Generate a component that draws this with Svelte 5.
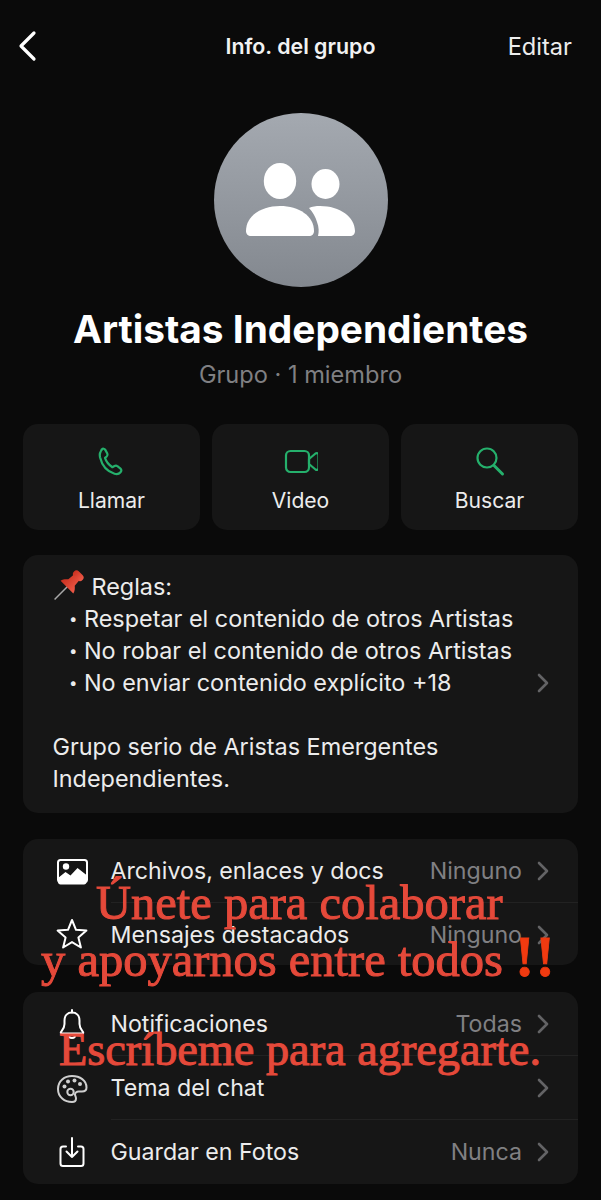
<script>
  const actions = [
    { label: 'Llamar', icon: 'phone' },
    { label: 'Video', icon: 'video' },
    { label: 'Buscar', icon: 'search' }
  ];
  const mediaRows = [
    { label: 'Archivos, enlaces y docs', value: 'Ninguno', icon: 'image' },
    { label: 'Mensajes destacados', value: 'Ninguno', icon: 'star' }
  ];
  const settingRows = [
    { label: 'Notificaciones', value: 'Todas', icon: 'bell' },
    { label: 'Tema del chat', value: '', icon: 'palette' },
    { label: 'Guardar en Fotos', value: 'Nunca', icon: 'save' }
  ];
  const rules = [
    'Respetar el contenido de otros Artistas',
    'No robar el contenido de otros Artistas',
    'No enviar contenido explícito +18'
  ];
</script>

{#snippet chevron()}
  <svg class="chev" width="12" height="20" viewBox="0 0 12 20" fill="none" stroke="#636365" stroke-width="2.600" stroke-linecap="round" stroke-linejoin="round"><path d="M2 2l8 8-8 8"/></svg>
{/snippet}

{#snippet rowIcon(name)}
  <svg width="34" height="34" viewBox="0 0 34 34" fill="none" stroke="#fff" stroke-width="2" stroke-linecap="round" stroke-linejoin="round">
    {#if name === 'image'}
      <rect x="3" y="6" width="29" height="22" rx="2.500" />
      <path d="M3 24l7.500-6 5 3.500 7-7.500 9 7v7c0 1.500-1 2.500-2.500 2.500H5.500C4 30.500 3 29.500 3 28z" fill="#fff" stroke="none" />
      <circle cx="11" cy="12.500" r="3.200" fill="#fff" stroke="none" />
    {:else if name === 'star'}
      <path d="M17 2l4 9.800 10.400.8-8 6.800 2.500 10.100L17 24.100l-8.900 5.400 2.500-10.100-8-6.800 10.400-.8z" />
    {:else if name === 'bell'}
      <path d="M6 25c2-2.500 3.500-4 3.500-8v-3.500c0-5 3-8 7.500-8s7.500 3 7.500 8V17c0 4 1.500 5.500 3.500 8 .5 1 0 1.500-1 1.500H7c-1 0-1.500-.5-1-1.500z"/>
      <path d="M17 3v2.500M13.500 27c0 2.500 1.500 4 3.500 4s3.500-1.500 3.500-4"/>
    {:else if name === 'palette'}
      <path d="M17 5C9.500 5 3 10 3 18s6.500 13 14 13c3 0 4-1.500 4-3.500s-1-2.500-1-4 1.500-3 3.500-3H27c3 0 4.500-1.500 4.500-4C31.500 9.500 25 5 17 5z" stroke="#cfcfcf"/>
      <circle cx="9.500" cy="15.500" r="2" fill="#cfcfcf" stroke="none" />
      <circle cx="13" cy="10.500" r="2" fill="#cfcfcf" stroke="none" />
      <circle cx="19.500" cy="9.500" r="2" fill="#cfcfcf" stroke="none" />
      <circle cx="25" cy="13" r="2" fill="#cfcfcf" stroke="none" />
      <circle cx="15.500" cy="21" r="3.200" stroke="#cfcfcf" />
    {:else}
      <path d="M11 11.500H8c-1.800 0-2.500 1-2.500 2.500v14.500C5.500 30 6.500 31 8 31h18c1.500 0 2.500-1 2.500-2.500V14c0-1.500-.7-2.500-2.500-2.500h-3"/>
      <path d="M17 3v19M11.500 16.500L17 22l5.500-5.500"/>
    {/if}
  </svg>
{/snippet}

<div class="screen">
  <header class="topbar">
    <svg class="back" width="20" height="32" viewBox="0 0 20 32" fill="none" stroke="#fff" stroke-width="3.200" stroke-linecap="round" stroke-linejoin="round"><path d="M16 3L3 16l13 13"/></svg>
    <div class="top-title">Info. del grupo</div>
    <div class="edit">Editar</div>
  </header>

  <div class="avatar">
    <svg width="110" height="74" viewBox="0 0 110 74" fill="#fff">
      <ellipse cx="34" cy="18" rx="16.200" ry="18" />
      <ellipse cx="79.500" cy="21" rx="14" ry="15" />
      <path d="M0 68C0 53 15 43 34 43s34 10 34 25c0 3-2 5-5 5H5c-3 0-5-2-5-5z" />
      <path d="M63 45c3-1.500 7-2 11-2 20 0 35 11 35 25 0 3-2 5-5 5H72c1-4 1-9-1-14-1.500-5-4-10-8-14z" />
    </svg>
  </div>

  <h1>Artistas Independientes</h1>
  <p class="sub">Grupo · 1 miembro</p>

  <div class="actions">
    {#each actions as a}
      <div class="action">
        <svg width="34" height="34" viewBox="0 0 34 34" fill="none" stroke="#25b06c" stroke-width="2.200" stroke-linecap="round" stroke-linejoin="round">
          {#if a.icon === 'phone'}
            <path d="M6.500 5.500c1.500-1.200 3-1 3.800.4l2 3.600c.6 1.200.3 2.200-.6 3l-1.700 1.400c1 3.200 3.800 7 7.400 9.300l2.100-1.200c1-.6 2-.6 2.900.2l3.100 2.400c1.200 1 1.100 2.500 0 3.700-1.500 1.800-3.600 2.200-6 1.500-7.500-2.300-12.500-8.300-14.500-16.500-.7-3.200.6-6.400 2.500-8.300z"/>
          {:else if a.icon === 'video'}
            <rect x="2" y="7" width="23" height="21" rx="4.500" />
            <path d="M25 15l6.500-5.500c1.500-1 3-.3 3 1.500v13c0 1.800-1.500 2.500-3 1.500L25 20z" />
          {:else}
            <circle cx="14" cy="14" r="9.500" />
            <path d="M21 21.500L29.500 30" stroke-width="3" />
          {/if}
        </svg>
        <span>{a.label}</span>
      </div>
    {/each}
  </div>

  <section class="card rules">
    <div class="text">
      <div class="line">
        <svg class="pin" width="30" height="30" viewBox="0 0 30 30">
          <defs>
            <linearGradient id="pinred" x1="0" y1="0" x2="1" y2="0">
              <stop offset="0" stop-color="#c9301f" />
              <stop offset="1" stop-color="#ee5a48" />
            </linearGradient>
          </defs>
          <g transform="rotate(45 15 15)">
            <path d="M15 15v19" stroke="#a8a8a8" stroke-width="1.500" />
            <rect x="9" y="-3" width="12" height="7" rx="3.500" fill="url(#pinred)" />
            <path d="M11 3h8l.5 7c1.800 1.500 4 3.500 4.500 6.500H6c.5-3 2.700-5 4.500-6.500z" fill="url(#pinred)" />
          </g>
        </svg>
        <span>Reglas:</span>
      </div>
      {#each rules as rule}
        <div class="line bullet"><span class="dot">•</span>{rule}</div>
      {/each}
      <div class="line"></div>
      <div class="line">Grupo serio de Aristas Emergentes</div>
      <div class="line">Independientes.</div>
    </div>
    <div class="rules-chev">{@render chevron()}</div>
  </section>

  <section class="card list first">
    {#each mediaRows as r}
      <div class="row">
        <span class="row-icon">{@render rowIcon(r.icon)}</span>
        <div class="row-body">
          <span class="row-label">{r.label}</span>
          <span class="row-value">{r.value}</span>
          {@render chevron()}
        </div>
      </div>
    {/each}
  </section>

  <section class="card list second">
    {#each settingRows as r}
      <div class="row">
        <span class="row-icon">{@render rowIcon(r.icon)}</span>
        <div class="row-body">
          <span class="row-label">{r.label}</span>
          <span class="row-value">{r.value}</span>
          {@render chevron()}
        </div>
      </div>
    {/each}
  </section>

  <div class="overlay o1">Únete para colaborar</div>
  <div class="overlay o2">y apoyarnos entre todos <span class="bang">!!</span></div>
  <div class="overlay o3">Escríbeme para agregarte.</div>
</div>

<style>
  :global(body) {
    margin: 0;
    background: #0a0a0a;
  }

  .screen {
    position: relative;
    width: 601px;
    height: 1200px;
    overflow: hidden;
    background: #0a0a0a;
    color: #fff;
    font-family: Inter, "Liberation Sans", sans-serif;
    box-sizing: border-box;
    padding: 0 23px;
  }

  .topbar {
    height: 92px;
    display: flex;
    align-items: center;
    justify-content: space-between;
    position: relative;
  }

  .back {
    margin-left: -5px;
  }

  .top-title {
    position: absolute;
    left: 0;
    right: 0;
    text-align: center;
    font-size: 21.400px;
    font-weight: 600;
    color: #f2f2f2;
  }

  .edit {
    font-size: 23.600px;
    color: #ededed;
    margin-right: 6px;
  }

  .avatar {
    width: 174px;
    height: 174px;
    margin: 21px auto 0;
    border-radius: 50%;
    background: linear-gradient(#a4a9b0, #83888f);
    display: flex;
    align-items: center;
    justify-content: center;
  }

  h1 {
    margin: 20px 0 0;
    height: 44px;
    line-height: 44px;
    text-align: center;
    font-size: 38.800px;
    font-weight: 700;
    white-space: nowrap;
  }

  .sub {
    margin: 9px 0 0;
    height: 30px;
    line-height: 30px;
    text-align: center;
    font-size: 23.600px;
    color: #808083;
  }

  .actions {
    margin-top: 34px;
    display: grid;
    grid-template-columns: repeat(3, 177px);
    gap: 12px;
  }

  .action {
    height: 106px;
    box-sizing: border-box;
    background: #161616;
    border-radius: 15px;
    display: flex;
    flex-direction: column;
    align-items: center;
    padding-top: 20px;
    font-size: 21.100px;
    color: #ececec;
  }

  .action span {
    margin-top: 10px;
    line-height: 26px;
  }

  .card {
    background: #161616;
    border-radius: 15px;
  }

  .rules {
    margin-top: 25px;
    height: 258px;
    box-sizing: border-box;
    padding: 16px 29px 0 29.500px;
    display: flex;
    justify-content: space-between;
    position: relative;
  }

  .line {
    height: 32px;
    line-height: 32px;
    font-size: 23.400px;
    color: #ececec;
    white-space: nowrap;
    display: flex;
    align-items: center;
  }

  .pin {
    margin: -2px 9px 0 0;
    overflow: visible;
  }

  .bullet {
    padding-left: 16.500px;
  }

  .dot {
    width: 15px;
    font-size: 15px;
  }

  .rules-chev {
    margin-top: 102px;
  }

  .list {
    overflow: hidden;
  }

  .first {
    margin-top: 26px;
    height: 126px;
  }

  .second {
    margin-top: 27px;
    height: 192px;
  }

  .row {
    height: 64px;
    display: flex;
    align-items: stretch;
  }

  .row-icon {
    width: 87.500px;
    flex: none;
    display: flex;
    align-items: center;
    padding-left: 32px;
    box-sizing: border-box;
  }

  .row-body {
    flex: 1;
    display: flex;
    align-items: center;
    padding-right: 29px;
    border-bottom: 1px solid #222;
    font-size: 23.200px;
  }

  .row:last-child .row-body {
    border-bottom: none;
  }

  .row-label {
    flex: 1;
    color: #ececec;
  }

  .row-value {
    color: #808083;
    margin-right: 15px;
  }

  .overlay {
    position: absolute;
    white-space: nowrap;
    font-family: "Liberation Serif", serif;
    font-size: 48.500px;
    line-height: 48px;
    color: #e5493a;
    -webkit-text-stroke: 1px #e5493a;
  }

  .o1 {
    left: 96px;
    top: 879px;
  }

  .o2 {
    left: 41px;
    top: 933px;
  }

  .o3 {
    left: 59px;
    top: 1026px;
    font-size: 46.300px;
  }

  .bang {
    color: #f03a10;
    font-weight: 700;
    font-size: 58px;
    letter-spacing: 1px;
    -webkit-text-stroke: 0.8px #f03a10;
  }
</style>
